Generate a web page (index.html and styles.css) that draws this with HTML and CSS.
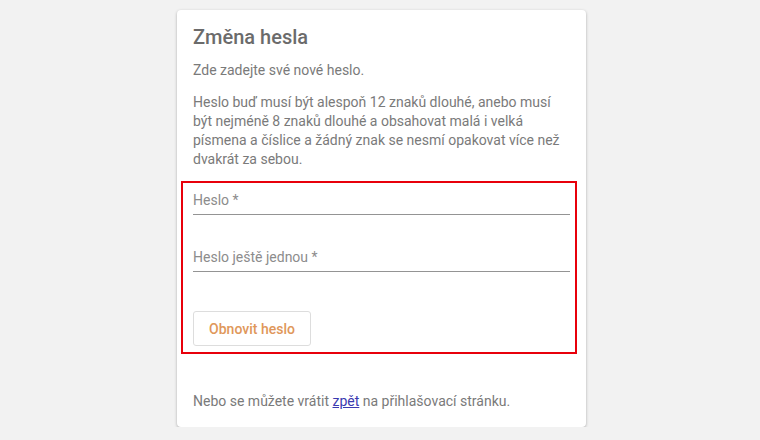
FILE: index.html
```html
<!DOCTYPE html>
<html lang="cs">
<head>
    <meta charset="UTF-8">
    <title>Změna hesla</title>
    <link rel="stylesheet" href="styles.css">
</head>
<body>

    <div class="card">
        <h1 class="card-title">Změna hesla</h1>
        <p class="intro">Zde zadejte své nové heslo.</p>
        <p class="rules">Heslo buď musí být alespoň 12 znaků dlouhé, anebo musí být nejméně 8 znaků dlouhé a obsahovat malá i velká písmena a číslice a žádný znak se nesmí opakovat více než dvakrát za sebou.</p>

        <!-- formular -->
        <form class="reset-form">
            <div class="field">
                <input type="password" placeholder="Heslo *">
            </div>
            <div class="field field-second">
                <input type="password" placeholder="Heslo ještě jednou *">
            </div>
            <button type="button" class="btn">Obnovit heslo</button>
        </form>

        <p class="back">Nebo se můžete vrátit <a href="#">zpět</a> na přihlašovací stránku.</p>
    </div>

</body>
</html>
```

FILE: styles.css
```css
*{
    margin: 0;
    padding: 0;
    box-sizing: border-box;
}

body{
    background: #f2f2f2;
    font-family: Roboto, "Liberation Sans", sans-serif;
    font-size: 14px;
    color: #7a7a7a;
}

.card{
    width: 409px;
    margin: 10px 0 0 calc(50% - 203px);
    padding: 16px 16px 16px;
    background: #fff;
    border-radius: 4px;
    box-shadow: 0 1px 3px rgba(0,0,0,0.3);
}

.card-title{
    font-size: 20px;
    font-weight: 500;
    line-height: 22px;
    color: #6b6b6b;
    margin-bottom: 13px;
}

.intro,
.rules,
.back{
    line-height: 19px;
}

.rules{
    margin-top: 13px;
}

.reset-form{
    margin: 12px -7px 0 -12px;
    padding: 3px 5px 6px 10px;
    border: 2px solid #e8000b;
}

.field input{
    display: block;
    width: 100%;
    border: 0;
    border-bottom: 1px solid #949494;
    padding: 4px 0;
    font-family: inherit;
    font-size: 14px;
    line-height: 20px;
    color: #555;
    outline: none;
    background: transparent;
}

.field input::placeholder{
    color: #8c8c8c;
}

.field-second{
    margin-top: 28px;
}

.btn{
    display: block;
    margin-top: 39px;
    width: 118px;
    height: 35px;
    background: #fff;
    border: 1px solid #ddd;
    border-radius: 3px;
    font-family: inherit;
    font-size: 14px;
    font-weight: 500;
    color: #e0975a;
    cursor: pointer;
}

.back{
    margin-top: 38px;
}

.back a{
    color: #3a3ab0;
}
```
